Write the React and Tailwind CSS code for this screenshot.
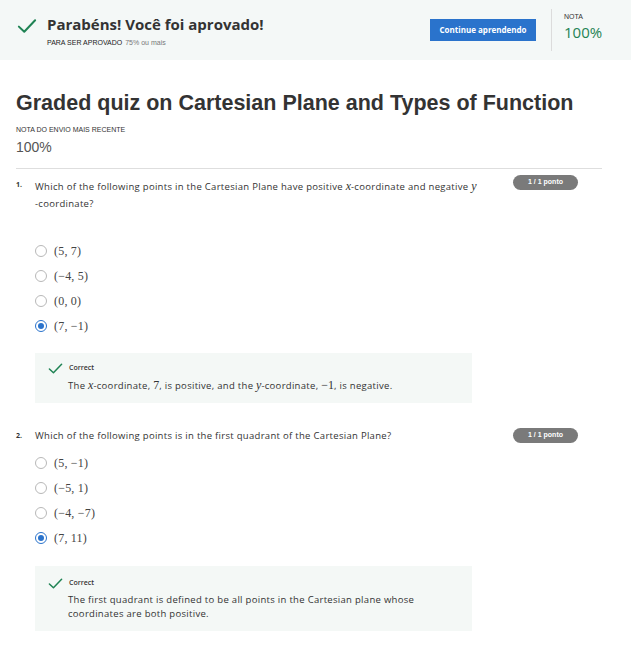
import React from "react";

const sans = { fontFamily: '"Open Sans", "DejaVu Sans", sans-serif' };

const Check = ({ className }) => (
    <svg viewBox="0 0 16 16" className={className} fill="none">
        <path d="M1.5 8.5 L5.8 12.6 L14.5 3.4" stroke="#1f8354" strokeWidth="1.6" strokeLinecap="round" strokeLinejoin="round" />
    </svg>
);

const M = ({ children, italic }) => (
    <span className={`font-['Liberation_Serif',serif] ${italic ? "italic" : ""} text-[12px] tracking-normal`}>{children}</span>
);

const Radio = ({ checked }) =>
    checked ? (
        <span className="w-[12px] h-[12px] rounded-full border-[1.5px] border-[#2a73cc] flex items-center justify-center">
            <span className="w-[6px] h-[6px] rounded-full bg-[#2a73cc]"></span>
        </span>
    ) : (
        <span className="w-[12px] h-[12px] rounded-full border border-[#b8b8b8] bg-white"></span>
    );

const Option = ({ label, checked }) => (
    <div className="flex items-center h-[25px] gap-[7px]">
        <Radio checked={checked} />
        <span className="font-['Liberation_Serif',serif] text-[12px] text-[#444] tracking-[0.2px]">{label}</span>
    </div>
);

const Badge = () => (
    <div className="w-[65px] h-[15px] rounded-full bg-[#7a7a7a] text-white text-[7px] font-bold flex items-center justify-center font-['Liberation_Sans',sans-serif]">
        1 / 1 ponto
    </div>
);

const Feedback = ({ children, pad }) => (
    <div className={`ml-[35px] w-[437px] bg-[#f4f8f6] pl-[13px] ${pad}`}>
        <div className="flex items-center gap-[6px]">
            <Check className="w-[15px] h-[15px]" />
            <span className="text-[7px] text-[#333] font-semibold">Correct</span>
        </div>
        <div className="pl-[20px] text-[9.5px] tracking-[0.3px] leading-[14px] text-[#333] mt-[2px]">{children}</div>
    </div>
);

export default function App() {
    return (
        <div className="w-[631px] h-[646px] bg-white overflow-hidden text-[#333]" style={sans}>
            {/* Header */}
            <div className="h-[60px] bg-[#f4f8f7] flex items-center">
                <div className="flex-1 flex items-start pl-[17px]">
                    <Check className="w-[20px] h-[20px] mt-[2px]" />
                    <div className="ml-[10px]">
                        <div className="text-[15px] font-bold leading-[20px] text-[#333]">Parabéns! Você foi aprovado!</div>
                        <div className="text-[7px] mt-[4px] leading-[9px] font-['Liberation_Sans',sans-serif]">
                            <span className="text-[#222]">PARA SER APROVADO</span>
                            <span className="text-[#777] ml-[3px]">75% ou mais</span>
                        </div>
                    </div>
                </div>
                <div className="w-[106px] h-[22px] bg-[#2a73cc] text-white text-[8px] font-bold flex items-center justify-center">
                    Continue aprendendo
                </div>
                <div className="ml-[15px] w-px h-[42px] bg-[#dcdcdc]"></div>
                <div className="ml-[12px] w-[67px] -mt-[7px]">
                    <div className="text-[7px] text-[#333] font-['Liberation_Sans',sans-serif]">NOTA</div>
                    <div className="text-[15px] leading-[18px] text-[#1f8354] mt-[1px]">100%</div>
                </div>
            </div>

            {/* Title */}
            <div className="px-[16px] pt-[31px]">
                <h1 className="text-[21.5px] font-bold leading-[24px] text-[#333] font-['Liberation_Sans',sans-serif]">
                    Graded quiz on Cartesian Plane and Types of Function
                </h1>
                <div className="text-[7px] mt-[10px] text-[#333] font-['Liberation_Sans',sans-serif] leading-[9px]">NOTA DO ENVIO MAIS RECENTE</div>
                <div className="text-[14px] mt-[4px] text-[#555] leading-[18px] font-['Liberation_Sans',sans-serif]">100%</div>
                <div className="mt-[12px] w-[586px] h-px bg-[#dedede]"></div>
            </div>

            {/* Question 1 */}
            <div className="flex pl-[16px] pt-[9px]">
                <div className="w-[19px] text-[7px] font-bold leading-[14px] text-[#333]">1.</div>
                <div className="w-[460px] text-[9.5px] tracking-[0.3px] leading-[17px] text-[#333]">
                    Which of the following points in the Cartesian Plane have positive <M italic>x</M>-coordinate and negative <M italic>y</M>
                    <br />-coordinate?
                </div>
                <div className="ml-[18px] -mt-[3px]"><Badge /></div>
            </div>
            <div className="pl-[35px] mt-[26px]">
                <Option label="(5, 7)" />
                <Option label="(−4, 5)" />
                <Option label="(0, 0)" />
                <Option label="(7, −1)" checked />
            </div>
            <div className="mt-[15px]">
                <Feedback pad="pt-[8px] pb-[10px]">
                    The <M italic>x</M>-coordinate, <M>7</M>, is positive, and the <M italic>y</M>-coordinate, <M>−1</M>, is negative.
                </Feedback>
            </div>

            {/* Question 2 */}
            <div className="flex pl-[16px] pt-[26px]">
                <div className="w-[19px] text-[7px] font-bold leading-[14px] text-[#333]">2.</div>
                <div className="w-[460px] text-[9.5px] tracking-[0.3px] leading-[14px] text-[#333]">
                    Which of the following points is in the first quadrant of the Cartesian Plane?
                </div>
                <div className="ml-[18px] -mt-[1px]"><Badge /></div>
            </div>
            <div className="pl-[35px] mt-[7px]">
                <Option label="(5, −1)" />
                <Option label="(−5, 1)" />
                <Option label="(−4, −7)" />
                <Option label="(7, 11)" checked />
            </div>
            <div className="mt-[16px]">
                <Feedback pad="pt-[10px] pb-[10px]">
                    The first quadrant is defined to be all points in the Cartesian plane whose<br />coordinates are both positive.
                </Feedback>
            </div>
        </div>
    );
}
